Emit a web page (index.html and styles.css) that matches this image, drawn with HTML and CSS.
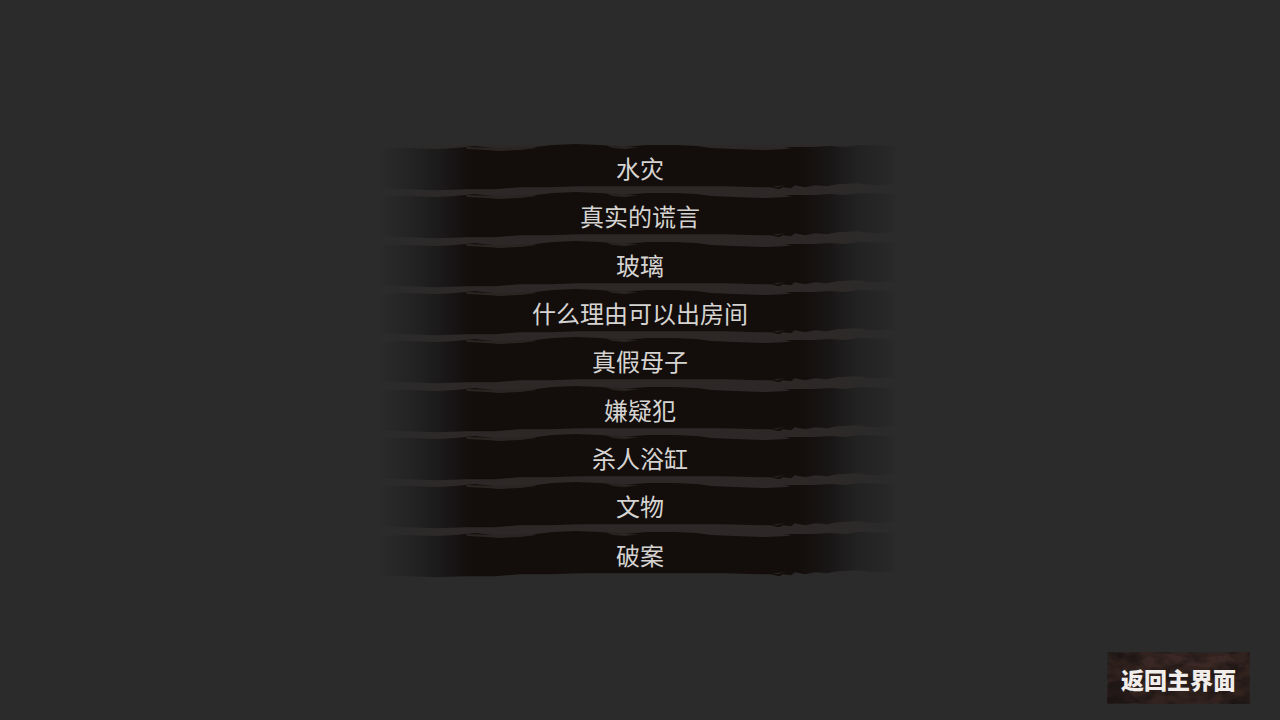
FILE: index.html
```html
<!DOCTYPE html>
<html lang="zh-CN">
<head>
<meta charset="utf-8">
<meta name="viewport" content="width=device-width, initial-scale=1">
<title>章节选择</title>
<link rel="stylesheet" href="styles.css">
</head>
<body>
<svg class="defs" aria-hidden="true">
  <defs>
    <linearGradient id="ink" gradientUnits="userSpaceOnUse" x1="0" y1="0" x2="530" y2="0">
      <stop offset="0" stop-color="#222222" stop-opacity="0"/>
      <stop offset="0.06" stop-color="#222222" stop-opacity="0.7"/>
      <stop offset="0.11" stop-color="#1d1c1c"/>
      <stop offset="0.155" stop-color="#171213"/>
      <stop offset="0.185" stop-color="#130e0b"/>
      <stop offset="0.8" stop-color="#130e0b"/>
      <stop offset="0.86" stop-color="#191617"/>
      <stop offset="0.91" stop-color="#212121" stop-opacity="0.9"/>
      <stop offset="0.96" stop-color="#242424" stop-opacity="0.6"/>
      <stop offset="1" stop-color="#262626" stop-opacity="0"/>
    </linearGradient>
    <symbol id="stroke" viewBox="0 0 530 48" preserveAspectRatio="none" overflow="visible">
      <path fill="url(#ink)" d="M5 4 L30 3 L62 4 L80 3 L100 1 L118 3 L140 4 L160 2 L178 0 L200 -1 L225 0 L248 2 L272 0 L300 0 L322 1 L336 3 L360 4 L390 5 L412 4 L416 3 L408 2 L438 2 L455 1 L470 2 L485 0 L520 1 L520 39 L500 40 L482 38 L462 39 L452 41 L440 40 L430 42 L420 40 L416 43 L408 42 L404 44 L396 42 L384 42 L350 41 L300 41 L262 41 L230 41 L205 41 L175 42 L145 42 L120 44 L92 44 L60 45 L35 44 L5 43Z"/>
      <path fill="#2a2523" d="M91 2 L122 3 L158 2 L162 3 L145 5 L124 6 L112 5 L92 4Z M232 1 L254 2 L264 2 L250 4 L238 3Z M398 41 L410 40 L402 42Z"/>
    </symbol>
  </defs>
</svg>
<main class="screen">
  <ul class="chapters">
    <li class="row"><svg class="brush" aria-hidden="true"><use href="#stroke"/></svg><button class="chapter" type="button">水灾</button></li>
    <li class="row"><svg class="brush" aria-hidden="true"><use href="#stroke"/></svg><button class="chapter" type="button">真实的谎言</button></li>
    <li class="row"><svg class="brush" aria-hidden="true"><use href="#stroke"/></svg><button class="chapter" type="button">玻璃</button></li>
    <li class="row"><svg class="brush" aria-hidden="true"><use href="#stroke"/></svg><button class="chapter" type="button">什么理由可以出房间</button></li>
    <li class="row"><svg class="brush" aria-hidden="true"><use href="#stroke"/></svg><button class="chapter" type="button">真假母子</button></li>
    <li class="row"><svg class="brush" aria-hidden="true"><use href="#stroke"/></svg><button class="chapter" type="button">嫌疑犯</button></li>
    <li class="row"><svg class="brush" aria-hidden="true"><use href="#stroke"/></svg><button class="chapter" type="button">杀人浴缸</button></li>
    <li class="row"><svg class="brush" aria-hidden="true"><use href="#stroke"/></svg><button class="chapter" type="button">文物</button></li>
    <li class="row"><svg class="brush" aria-hidden="true"><use href="#stroke"/></svg><button class="chapter" type="button">破案</button></li>
  </ul>
  <button class="back" type="button">
    <svg class="rust" viewBox="0 0 144 52" preserveAspectRatio="none" aria-hidden="true">
      <filter id="grain" x="0" y="0" width="100%" height="100%" color-interpolation-filters="sRGB">
        <feTurbulence type="fractalNoise" baseFrequency="0.06 0.09" numOctaves="4" seed="8"/>
        <feColorMatrix values="0 0 0 0 0.09  0 0 0 0 0.07  0 0 0 0 0.07  1.8 0 0 0 -0.65"/>
      </filter>
      <path fill="#33231f" d="M2 1 L40 0 L98 1 L144 0 L143 28 L144 51 L60 52 L0 51 L1 25Z"/>
      <path fill="#45302b" opacity="0.5" d="M30 5 L60 1 L85 7 L122 3 L138 14 L110 17 L74 12 L42 16Z"/>
      <path fill="#1c1415" opacity="0.6" d="M1 30 L15 28 L24 42 L36 51 L1 51Z"/>
      <rect width="144" height="52" filter="url(#grain)"/>
    </svg>
    <span class="back-label">返回主界面</span>
  </button>
</main>
</body>
</html>
```
FILE: styles.css
```css
* {
  box-sizing: border-box;
}

body {
  margin: 0;
  background: #2b2b2b;
  color: #d6d4d2;
  font-family: "Noto Sans CJK SC", sans-serif;
}

.defs {
  position: absolute;
  width: 0;
  height: 0;
}

.screen {
  min-height: 100vh;
  display: flex;
  flex-direction: column;
  align-items: center;
  justify-content: space-between;
  padding: 145px 30px 16px;
}

.chapters {
  width: 100%;
  max-width: 530px;
  min-height: 435px;
  margin: 0;
  padding: 0;
  list-style: none;
  display: grid;
  grid-auto-rows: 1fr;
  background: linear-gradient(90deg, transparent 2%, #2d2827 18%, #2d2827 82%, transparent 98%) 0 0 / 100% 428px no-repeat;
}

.row {
  position: relative;
  display: flex;
}

.brush {
  position: absolute;
  inset: 0;
  width: 100%;
  height: 100%;
  overflow: visible;
}

.chapter,
.back {
  position: relative;
  border: 0;
  padding: 0;
  background: none;
  color: inherit;
  font-family: inherit;
  cursor: pointer;
}

.chapter {
  flex: 1;
  padding-bottom: 2px;
  font-size: 24px;
  font-weight: 400;
  line-height: 32px;
}

.back {
  align-self: flex-end;
  display: grid;
  place-items: center;
  min-height: 52px;
  padding: 9px 14px 7px;
}

.rust {
  position: absolute;
  inset: 0;
  width: 100%;
  height: 100%;
}

.back-label {
  position: relative;
  color: #f0edeb;
  font-size: 23px;
  font-weight: 900;
  line-height: 36px;
}
```
